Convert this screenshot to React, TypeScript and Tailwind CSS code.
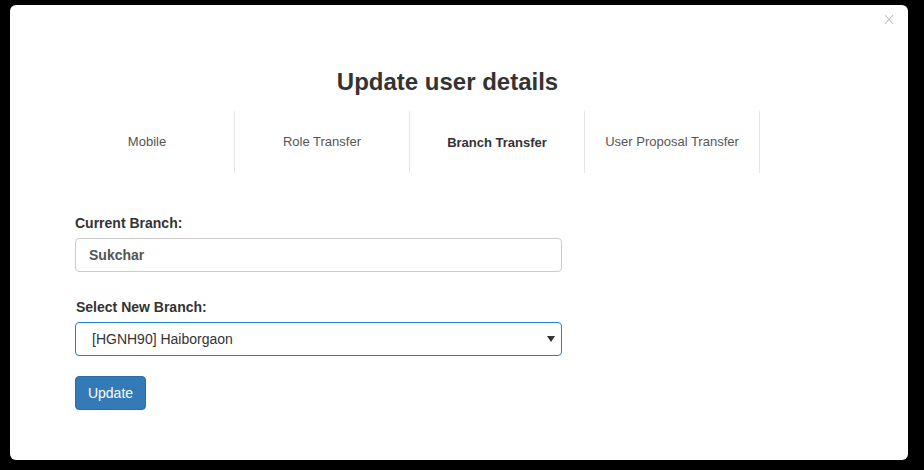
import React from "react";

export default function App() {
  const tabs = [
    { label: "Mobile", active: false },
    { label: "Role Transfer", active: false },
    { label: "Branch Transfer", active: true },
    { label: "User Proposal Transfer", active: false },
  ];
  return (
    <div
      className="w-[924px] h-[470px] bg-black pt-[5px] pl-[10px] overflow-hidden"
      style={{ fontFamily: '"Liberation Sans", Arial, sans-serif' }}
    >
      <div className="relative w-[898px] h-[455px] bg-white rounded-[6px]">
        <button className="absolute right-[14px] top-[9px] w-[10px] h-[11px] flex items-center justify-center">
          <svg width="10" height="11" viewBox="0 0 10 11">
            <path d="M1 1 L9 10 M9 1 L1 10" stroke="#bdbdbd" strokeWidth="1.1" fill="none" />
          </svg>
        </button>
        <div className="pt-[64px]">
          <h2 className="w-[875px] text-center text-[24px] leading-[26px] font-bold text-[#333]">
            Update user details
          </h2>
          <div className="flex mt-[16px] ml-[50px]">
            {tabs.map((t) => (
              <div
                key={t.label}
                className="w-[175px] h-[62px] border-r border-[#e6e6e6] flex items-center justify-center"
              >
                <span
                  className={
                    t.active
                      ? "text-[13px] font-bold text-[#333] mt-[1px]"
                      : "text-[13px] text-[#555] -mt-[1px]"
                  }
                >
                  {t.label}
                </span>
              </div>
            ))}
          </div>
          <div className="ml-[65px] mt-[40px] w-[487px]">
            <div className="text-[14px] leading-[20px] font-bold text-[#333]">Current Branch:</div>
            <div className="mt-[5px] h-[34px] border border-[#cccccc] rounded-[4px] flex items-center pl-[13px]">
              <span className="text-[14px] font-bold text-[#555]">Sukchar</span>
            </div>
            <div className="mt-[25px] pl-[1px] text-[14px] leading-[20px] font-bold text-[#333]">
              Select New Branch:
            </div>
            <div className="mt-[5px] h-[34px] border border-[#1f7fd4] rounded-[4px] flex items-center pl-[16px] pr-[6px]">
              <span className="text-[14px] text-[#333] flex-1">[HGNH90] Haiborgaon</span>
              <svg width="8" height="6" viewBox="0 0 8 6">
                <path d="M0 0 H8 L4 6 Z" fill="#333" />
              </svg>
            </div>
            <button className="mt-[20px] w-[71px] h-[34px] bg-[#337ab7] border border-[#2e6da4] rounded-[4px] text-white text-[14px] flex items-center justify-center">
              Update
            </button>
          </div>
        </div>
      </div>
    </div>
  );
}
